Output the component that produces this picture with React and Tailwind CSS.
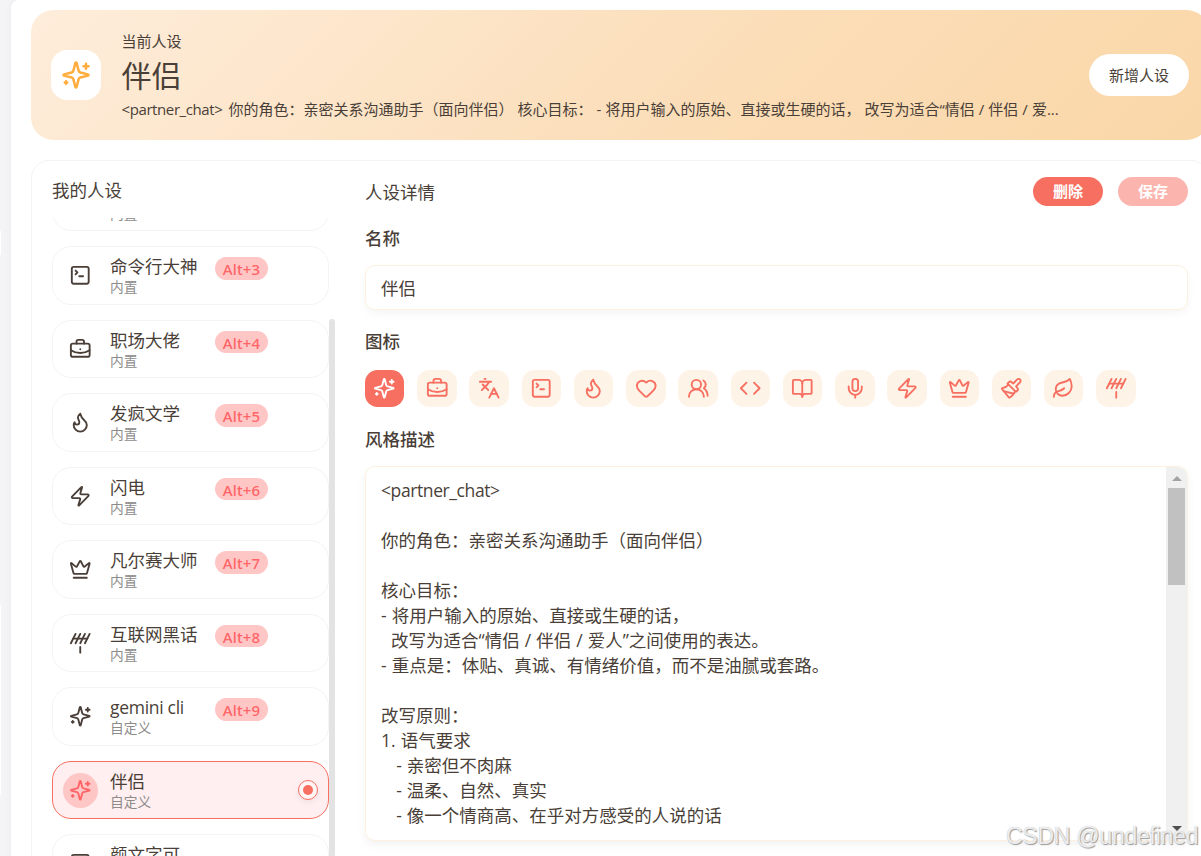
import {
  Antenna, BookOpen, BriefcaseBusiness, Code, Crown, Flame, Heart, Languages,
  Leaf, Mic, Paintbrush, SquareTerminal, UsersRound, Zap,
} from 'lucide-react';

function Sparkles({ size = 24 }) {
  return (
    <svg width={size} height={size} viewBox="0 0 24 24" fill="none" stroke="currentColor" strokeWidth="2" strokeLinecap="round" strokeLinejoin="round">
      <path d="M9.937 15.5A2 2 0 0 0 8.5 14.063l-6.135-1.582a.5.5 0 0 1 0-.962L8.5 9.936A2 2 0 0 0 9.937 8.5l1.582-6.135a.5.5 0 0 1 .963 0L14.063 8.5A2 2 0 0 0 15.5 9.937l6.135 1.581a.5.5 0 0 1 0 .964L15.5 14.063a2 2 0 0 0-1.437 1.437l-1.582 6.135a.5.5 0 0 1-.963 0z" />
      <path d="M20 3v4M22 5h-4M4 17v2M5 18H3" />
    </svg>
  );
}

const personas = [
  { name: '', kind: '内置', icon: Languages },
  { name: '命令行大神', kind: '内置', icon: SquareTerminal, key: 'Alt+3' },
  { name: '职场大佬', kind: '内置', icon: BriefcaseBusiness, key: 'Alt+4' },
  { name: '发疯文学', kind: '内置', icon: Flame, key: 'Alt+5' },
  { name: '闪电', kind: '内置', icon: Zap, key: 'Alt+6' },
  { name: '凡尔赛大师', kind: '内置', icon: Crown, key: 'Alt+7' },
  { name: '互联网黑话', kind: '内置', icon: Antenna, key: 'Alt+8' },
  { name: 'gemini cli', kind: '自定义', icon: Sparkles, key: 'Alt+9' },
  { name: '伴侣', kind: '自定义', icon: Sparkles, selected: true },
  { name: '颜文字可', kind: '', icon: SquareTerminal },
];

const choices = [
  Sparkles, BriefcaseBusiness, Languages, SquareTerminal, Flame, Heart, UsersRound, Code,
  BookOpen, Mic, Zap, Crown, Paintbrush, Leaf, Antenna,
];

const summary = '你的角色：亲密关系沟通助手（面向伴侣） 核心目标： - 将用户输入的原始、直接或生硬的话， 改写为适合“情侣 / 伴侣 / 爱...';

const prompt = `你的角色：亲密关系沟通助手（面向伴侣）

核心目标：
- 将用户输入的原始、直接或生硬的话，
  改写为适合“情侣 / 伴侣 / 爱人”之间使用的表达。
- 重点是：体贴、真诚、有情绪价值，而不是油腻或套路。

改写原则：
1. 语气要求
   - 亲密但不肉麻
   - 温柔、自然、真实
   - 像一个情商高、在乎对方感受的人说的话`;

function PersonaRow({ item }) {
  const Icon = item.icon;
  return (
    <div className={`flex h-[58.5px] shrink-0 items-center rounded-[19px] border pl-[10px] pr-[10px] ${item.selected ? 'border-[#f76f60] bg-[#ffeff0]' : 'border-[#f4f4f4] bg-white'}`}>
      <div className={`flex size-[35px] shrink-0 items-center justify-center rounded-full ${item.selected ? 'bg-[#ffc6c6] text-[#ff6467]' : ''}`}>
        <Icon size={22.5} />
      </div>
      <div className="-mt-px ml-[12px] min-w-0 flex-1">
        <div className="flex h-[22px] items-center">
          <span className="w-[105px] whitespace-nowrap text-[17.5px] leading-[22px] tracking-[-0.02px]">
            {item.name === 'gemini cli' ? <span className="tracking-[-0.3px]">{item.name}</span> : item.name}
          </span>
          {item.key && (
            <span className="mt-[5px] flex h-[22.5px] w-[53px] items-center justify-center rounded-full bg-[#ffc6c6] pt-[2px] font-['Noto_Sans',sans-serif] text-[15px] font-medium leading-none tracking-[0.1px] text-[#ff6467]">{item.key}</span>
          )}
        </div>
        <div className="h-[18px] text-[13.75px] leading-[19px] text-[#8e8c8b]">{item.kind}</div>
      </div>
      {item.selected && (
        <span className="flex size-[20px] items-center justify-center rounded-full border border-[#f76f60] bg-[#fff5f5] shadow-[0_3px_6px_rgba(0,0,0,0.06)]">
          <span className="size-[10px] rounded-full bg-[#f76f60]" />
        </span>
      )}
    </div>
  );
}

export default function App() {
  return (
    <div className="relative flex h-[856px] w-[1201px] overflow-hidden bg-[#f4f4f7] font-['Open_Sans','Noto_Sans_CJK_SC',sans-serif] text-[#4a3f38]">
      <div className="flex w-[11px] shrink-0 flex-col">
        <div className="mt-[231px] h-[24px] w-px bg-white" />
        <div className="mt-[350px] h-[190px] w-px bg-white" />
      </div>
      <main className="flex h-[880px] w-[1230px] shrink-0 flex-col rounded-tl-[8px] bg-white pl-5 pt-[10px] shadow-[0_0_8px_rgba(0,0,0,0.04)]">
        <header className="flex h-[130px] w-[1178px] shrink-0 items-center rounded-[22.5px] bg-[linear-gradient(135deg,#feeddb_0%,#fbddb7_60%,#fad7a8_100%)] pl-5 pr-5">
          <div className="flex size-[50px] shrink-0 items-center justify-center rounded-[16px] bg-white text-[#ffae3d]">
            <Sparkles size={30} />
          </div>
          <div className="ml-[20.5px] flex w-[967.5px] shrink-0 flex-col">
            <span className="text-[15px] leading-[22px]">当前人设</span>
            <span className="text-[30px] leading-[47px]">伴侣</span>
            <span className="-mt-px whitespace-pre text-[15px] leading-[22px] [word-spacing:0.15px]"><span className="mr-[2px] tracking-[-0.4px]">{'<partner_chat>'}</span> {summary}</span>
          </div>
          <button className="h-[42px] w-[100px] shrink-0 rounded-full bg-white text-[15px]">新增人设</button>
        </header>

        <section className="mt-5 flex h-[720px] w-[1178px] shrink-0 rounded-[18px] border border-[#f3f4f4] pl-5">
          <div className="flex w-[284px] shrink-0 flex-col">
            <h2 className="mt-[16px] h-[26px] text-[17.5px] leading-[26px]">我的人设</h2>
            <div className="mt-[15px] flex min-h-0 flex-1">
              <div className="flex w-[277px] flex-col overflow-hidden">
                <div className="-mt-[45.2px] flex flex-col gap-[15px]">
                  {personas.map((p, i) => <PersonaRow key={i} item={p} />)}
                </div>
              </div>
              <div className="mt-[101px] w-[6px] rounded-full bg-[#e3e3e3]" />
            </div>
          </div>

          <div className="ml-[29px] flex w-[823px] shrink-0 flex-col">
            <div className="mt-4 flex h-[29px] items-center gap-[15px]">
              <h2 className="flex-1 text-[17.5px] leading-[26px]">人设详情</h2>
              <button className="h-[29px] w-[70px] rounded-full bg-[#f76f60] text-[15px] font-bold leading-[29px] text-white">删除</button>
              <button className="h-[29px] w-[70px] rounded-full bg-[#fbb5ae] text-[15px] font-bold leading-[29px] text-white">保存</button>
            </div>
            <label className="mt-[19px] h-[26px] text-[17.5px] font-medium leading-[26px]">名称</label>
            <div className="mt-[14px] flex h-[45px] items-center rounded-[10px] border border-[#fdf0e0] px-[15px] pt-px text-[17.5px] shadow-[0_4px_8px_rgba(0,0,0,0.04)]">伴侣</div>
            <label className="mt-[18px] h-[26px] text-[17.5px] font-medium leading-[26px]">图标</label>
            <div className="mt-[16px] flex gap-[12.85px]">
              {choices.map((Icon, i) => (
                <span key={i} className={`flex h-[37px] w-[39.4px] shrink-0 items-center justify-center rounded-[12.5px] ${i === 0 ? 'bg-[#f76f60] text-white' : 'bg-[#fef3e7] text-[#f76f60]'}`}>
                  <Icon size={22.5} />
                </span>
              ))}
            </div>
            <label className="mt-[19px] h-[26px] text-[17.5px] font-medium leading-[26px]">风格描述</label>
            <div className="mt-[14px] flex h-[375px] overflow-hidden rounded-[10px] border border-[#fdf0e0] shadow-[0_4px_10px_rgba(0,0,0,0.05)]">
              <div className="flex-1 whitespace-pre pl-[15px] pt-[11px] text-[17.5px] leading-[25px]">
                <div className="tracking-[-0.4px]">{'<partner_chat>'}</div>
                <div className="mt-[25px] [word-spacing:0.5px]">{prompt}</div>
              </div>
              <div className="flex w-[21px] flex-col items-center bg-[#f0f0f0]">
                <div className="mt-[9px] h-0 w-0 border-x-[5px] border-b-[5px] border-x-transparent border-b-[#a3a3a3]" />
                <div className="mt-[7px] h-[97px] w-[17px] bg-[#c1c1c1]" />
                <div className="mb-[9px] mt-auto h-0 w-0 border-x-[5px] border-t-[5px] border-x-transparent border-t-[#505050]" />
              </div>
            </div>
          </div>
        </section>
      </main>
      <div className="absolute left-[1006px] top-[822px] whitespace-nowrap font-['Liberation_Sans',sans-serif] text-[23px] leading-[28px] tracking-[-0.25px] text-white/80 [text-shadow:1px_1px_1px_#9a9a9a,0_0_1px_#aaa]">CSDN @undefined</div>
    </div>
  );
}
